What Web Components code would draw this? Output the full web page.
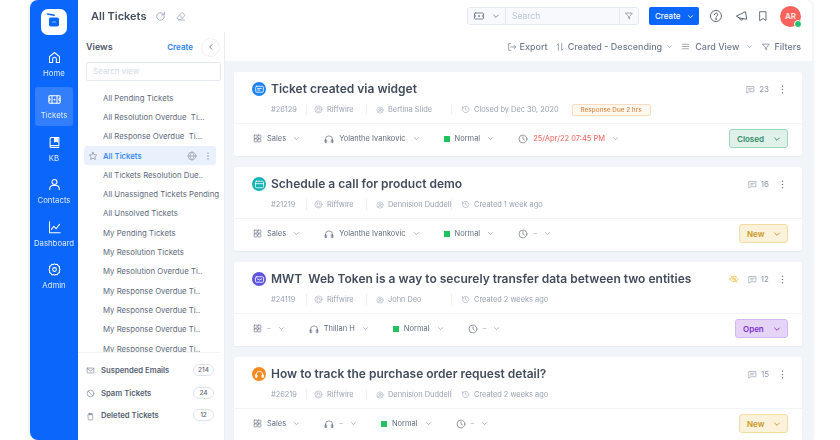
<!DOCTYPE html>
<html><head><meta charset="utf-8"><title>All Tickets</title>
<style>
html,body{margin:0;padding:0;background:#fff;height:440px;overflow:hidden;font-family:Inter,"Liberation Sans",sans-serif}
</style></head><body>
<app-shell>
  <side-rail slot="rail">
    <rail-item icon="home" label="Home"></rail-item>
    <rail-item icon="ticket" label="Tickets" active></rail-item>
    <rail-item icon="book" label="KB"></rail-item>
    <rail-item icon="user" label="Contacts"></rail-item>
    <rail-item icon="chart" label="Dashboard"></rail-item>
    <rail-item icon="gear" label="Admin"></rail-item>
  </side-rail>
  <top-bar slot="top"></top-bar>
  <views-panel slot="views">
    <view-item>All Pending Tickets</view-item>
    <view-item>All Resolution Overdue&nbsp; Ti...</view-item>
    <view-item>All Response Overdue&nbsp; Ti...</view-item>
    <view-item selected>All Tickets</view-item>
    <view-item>All Tickets Resolution Due..</view-item>
    <view-item>All Unassigned Tickets Pending</view-item>
    <view-item>All Unsolved Tickets</view-item>
    <view-item>My Pending Tickets</view-item>
    <view-item>My Resolution Tickets</view-item>
    <view-item>My Resolution Overdue Ti..</view-item>
    <view-item>My Response Overdue Ti..</view-item>
    <view-item>My Response Overdue Ti..</view-item>
    <view-item>My Response Overdue Ti..</view-item>
    <view-item>My Response Overdue Ti..</view-item>
    <count-row slot="foot" icon="mail" count="214">Suspended Emails</count-row>
    <count-row slot="foot" icon="ban" count="24">Spam Tickets</count-row>
    <count-row slot="foot" icon="trash" count="12">Deleted Tickets</count-row>
  </views-panel>
  <list-toolbar slot="toolbar"></list-toolbar>
  <ticket-card slot="cards" kind="chat" color="#1d84f0" title="Ticket created via widget" num="#26129" org="Riffwire" who="Bertina Slide" when="Closed by Dec 30, 2020" due="Response Due 2 hrs" comments="23" dept="Sales" agent="Yolanthe Ivankovic" date="25/Apr/22 07:45 PM" status="closed"></ticket-card>
  <ticket-card slot="cards" kind="card" color="#14b3b3" title="Schedule a call for product demo" num="#21219" org="Riffwire" who="Dennision Duddell" when="Created 1 week ago" comments="16" dept="Sales" agent="Yolanthe Ivankovic" date="–" status="new"></ticket-card>
  <ticket-card slot="cards" kind="mail" color="#5f55e0" title="MWT&nbsp; Web Token is a way to securely transfer data between two entities" num="#24119" org="Riffwire" who="John Deo" when="Created 2 weeks ago" comments="12" dept="–" agent="Thillan H" date="–" status="open" muted></ticket-card>
  <ticket-card slot="cards" kind="headset" color="#f68a1f" title="How to track the purchase order request detail?" num="#26219" org="Riffwire" who="Dennision Duddell" when="Created 2 weeks ago" comments="15" dept="Sales" agent="–" date="–" status="new"></ticket-card>
</app-shell>
<script>
const P={
home:'<path d="M4 10.500 12 4l8 6.500V20h-5v-5.500a3 3 0 0 0-6 0V20H4z"/>',
ticket:'<rect x="3" y="6" width="18" height="12" rx="1.500"/><path d="M3 10a2 2 0 0 1 0 4M21 10a2 2 0 0 0 0 4M8 6v12M16 6v12"/><path d="m12 10 .7 1.400 1.500.2-1.100 1 .3 1.400-1.400-.7-1.400.7.3-1.400-1.100-1 1.500-.2z" fill="currentColor" stroke="none"/>',
book:'<path d="M5 19V5.500A1.500 1.500 0 0 1 6.500 4H19v13H6.500A1.500 1.500 0 0 0 5 18.500 1.500 1.500 0 0 0 6.500 20H19"/><path d="M12 4h5v7l-2.500-1.500L12 11z" fill="currentColor"/>',
user:'<circle cx="12" cy="8" r="4"/><path d="M4.500 20v-1.500a5 5 0 0 1 5-5h5a5 5 0 0 1 5 5V20"/>',
chart:'<path d="M4 3v17.500h17"/><path d="m7 15 4-5 3.500 4L20 7"/>',
gear:'<circle cx="12" cy="12" r="3"/><path d="m12 3 2 1 2.500-.300 1.300 2.200 2.200 1.300L19.700 9.700l1 2.300-1 2.300.300 2.500-2.200 1.300-1.300 2.200-2.500-.300-2 1-2-1-2.500.300-1.300-2.200L4 16.800l.300-2.500-1-2.300 1-2.300L4 7.200l2.200-1.300L7.500 3.700 10 4z"/>',
refresh:'<path d="M19 12a7 7 0 1 1-2.200-5.100L19 9"/><path d="M19.500 4v5h-5"/>',
eraser:'<path d="m4 15 9-9a2 2 0 0 1 2.800 0l3.200 3.200a2 2 0 0 1 0 2.800l-7 7H8z"/><path d="m9 10 6 6M6 20h13"/>',
search:'<rect x="3" y="6" width="18" height="12" rx="1.500"/><path d="M3 10a2 2 0 0 1 0 4M21 10a2 2 0 0 0 0 4"/><path d="m12 9.500 .8 1.700 1.800.2-1.300 1.200.3 1.800-1.600-.9-1.600.9.300-1.800-1.300-1.200 1.800-.2z" fill="currentColor" stroke="none"/>',
funnel:'<path d="M4 5h16l-6.500 8v6l-3-2v-4z"/>',
help:'<circle cx="12" cy="12" r="9.500"/><path d="M9.300 9.500a2.800 2.800 0 1 1 4.300 2.400c-1 .6-1.600 1.200-1.600 2.300"/><circle cx="12" cy="17.300" r=".6" fill="currentColor"/>',
mega:'<path d="m3 12 15-7.500 2 13L8 15.500z"/><path d="M8 15.500a3 3 0 0 0 6 1"/>',
bookmark:'<path d="M6 3.500h12V21l-6-4-6 4z"/>',
export:'<path d="M9 4H4v16h5"/><path d="M9 12h12M17 8l4 4-4 4"/>',
sort:'<path d="M8 20V4L4.500 7.500M16 4v16l3.500-3.500"/>',
lines:'<path d="M4 6h16M4 12h16M4 18h16"/>',
chev:'<path d="m5 9 7 7 7-7"/>',
back:'<path d="m15 5-7 7 7 7"/>',
dots:'<circle cx="12" cy="5" r="1.600" fill="currentColor" stroke="none"/><circle cx="12" cy="12" r="1.600" fill="currentColor" stroke="none"/><circle cx="12" cy="19" r="1.600" fill="currentColor" stroke="none"/>',
star:'<path d="m12 3 2.800 5.800 6.200.9-4.500 4.400 1.100 6.300L12 17.400l-5.600 3 1.100-6.300L3 9.700l6.200-.9z"/>',
globe:'<circle cx="12" cy="12" r="9.500"/><path d="M2.500 12h19M12 2.500c-6 6-6 13 0 19M12 2.500c6 6 6 13 0 19"/>',
mail:'<rect x="3" y="5.500" width="18" height="13" rx="1.500"/><path d="m3.500 7 8.500 6 8.500-6"/>',
ban:'<circle cx="12" cy="12" r="9"/><path d="m5.800 5.800 12.400 12.400"/>',
trash:'<path d="M8 4h8M6 7h12v13a1 1 0 0 1-1 1H7a1 1 0 0 1-1-1z"/><path d="M9 4h6v3H9z"/>',
org:'<circle cx="12" cy="12" r="9.500"/><path d="M8 8h8l-1 3 2 3-5 5-5-5 2-3z"/>',
person:'<circle cx="12" cy="12" r="9.500"/><circle cx="12" cy="10" r="3.500"/><path d="M6 19c1-3 3-4 6-4s5 1 6 4"/>',
history:'<path d="M4 12a8.500 8.500 0 1 0 2.500-6L3.500 8.500"/><path d="M3.500 4v4.500H8M12 7.500V12l3 2"/>',
grid:'<rect x="3" y="3" width="8" height="8" rx="1"/><rect x="13" y="3" width="8" height="8" rx="1"/><rect x="3" y="13" width="8" height="8" rx="1"/><rect x="13" y="13" width="8" height="8" rx="1"/>',
headset:'<path d="M3.500 20v-7a8.500 8.500 0 0 1 17 0v7"/><rect x="2.500" y="14" width="4" height="7" rx="1.500"/><rect x="17.500" y="14" width="4" height="7" rx="1.500"/>',
clock:'<circle cx="12" cy="12" r="9.500"/><path d="M12 6.500V12l3.500 2.500"/>',
comment:'<path d="M3 4h18v14H8l-5 3z"/><path d="M7 9h10M7 13h6"/>',
eyeoff:'<path d="M2 12s3.500-6.500 10-6.500S22 12 22 12s-3.500 6.500-10 6.500S2 12 2 12z"/><circle cx="12" cy="12" r="3"/><path d="m4 4 16 16"/>',
chat:'<rect x="5" y="6" width="14" height="11" rx="1.500"/><path d="M8.500 10h7M8.500 13h4"/>',
card:'<rect x="4.500" y="6" width="15" height="12" rx="2"/><path d="M4.500 10.500h15"/>',
envelope:'<rect x="4.500" y="7" width="15" height="10" rx="2"/><path d="m8 11 4 2 4-2"/>',
hs:'<path d="M6 17v-5a6 6 0 0 1 12 0v5"/><rect x="4.500" y="12.500" width="3" height="5" rx="1" fill="currentColor"/><rect x="16.500" y="12.500" width="3" height="5" rx="1" fill="currentColor"/>'
};
const ico=(n,s,w=1.8,extra='')=>`<svg width="${s}" height="${s}" viewBox="0 0 24 24" fill="none" stroke="currentColor" stroke-width="${w}" stroke-linecap="round" stroke-linejoin="round" style="flex:none;display:block;${extra}">${P[n]}</svg>`;
function def(name,css,html){
  customElements.define(name,class extends HTMLElement{
    connectedCallback(){
      if(this.shadowRoot)return;
      const r=this.attachShadow({mode:'open'});
      r.innerHTML=`<style>${css}</style>`+(typeof html==='function'?html(this):html);
    }
  });
}
def('app-shell',`
:host{display:grid;grid-template-columns:48px 147px 1fr;grid-template-rows:32px 1fr;width:782px;height:440px;margin-left:30px;background:#fff;border-radius:8px 8px 0 8px;overflow:hidden;box-shadow:0 0 4px rgba(30,60,110,.16);filter:blur(.3px)}
.rail{grid-row:1/3;display:flex;min-height:0}
.top{grid-column:2/4;display:flex;min-width:0}
.views{display:flex;min-height:0}
.main{display:flex;flex-direction:column;background:#f1f5f9;min-width:0;min-height:0;overflow:hidden}
.cards{display:flex;flex-direction:column;gap:11px;padding:11px 10px 0 9px}
`,`<div class="rail"><slot name="rail"></slot></div><div class="top"><slot name="top"></slot></div><div class="views"><slot name="views"></slot></div><div class="main"><slot name="toolbar"></slot><div class="cards"><slot name="cards"></slot></div></div>`);
def('side-rail',`
:host{display:flex;flex-direction:column;align-items:center;width:48px;background:#0b66fb;color:#fff}
.logo{display:block;margin:9px 0 9px;flex:none}
.list{display:flex;flex-direction:column;gap:3.500px;align-items:center}
`,`<svg class="logo" width="26" height="26" viewBox="0 0 26 26"><rect width="26" height="26" rx="7" fill="#fff"/><path d="M6.500 5 13 6.300" stroke="#0b66fb" stroke-width="1.600" stroke-linecap="round"/><rect x="8" y="8.500" width="10" height="9" rx="1.800" fill="#0b66fb"/><path d="M11 13h4" stroke="#fff" stroke-width="1" opacity=".5"/></svg><div class="list"><slot></slot></div>`);
def('rail-item',`
:host{display:flex;flex-direction:column;align-items:center;justify-content:center;gap:3px;width:38px;height:39px;border-radius:3px;color:#fff;font:400 7.800px/10px Inter,sans-serif;white-space:nowrap}
:host([active]){background:rgba(255,255,255,.16)}
span{color:#dfeaff}
`,h=>`${ico(h.getAttribute('icon'),15,1.7)}<span>${h.getAttribute('label')}</span>`);
def('top-bar',`
:host{flex:1;display:flex;align-items:center;padding:0 11px 0 13px;background:#fff;border-bottom:1px solid #edf1f6;box-sizing:border-box;height:33px;color:#59657a}
h1{margin:0;font:600 11px/16px Inter,sans-serif;color:#464f60;white-space:nowrap}
.a{display:flex;align-items:center;gap:8px;margin-left:8px;color:#98a4b6}
.search{margin-left:auto;display:flex;align-items:stretch;width:172px;height:18px;border:1px solid #e3e9f1;border-radius:3px;box-sizing:border-box;background:#f7f9fc}
.s1{width:38px;display:flex;align-items:center;justify-content:center;gap:7px;color:#6b778a;border-right:1px solid #e3e9f1;box-sizing:border-box}
.s2{flex:1;font:400 8.500px/16px Inter,sans-serif;color:#bcc6d4;padding-left:6px}
.s3{width:18px;display:flex;align-items:center;justify-content:center;border-left:1px solid #e3e9f1;color:#828d9f}
.btn{margin-left:10px;width:50px;height:18px;background:#0b66fb;color:#fff;border-radius:2px;display:flex;align-items:center;justify-content:space-between;padding:0 5px;box-sizing:border-box;font:500 8px/18px Inter,sans-serif}
.i{display:flex;align-items:center;margin-left:10px;color:#5d6879}
.av{position:relative;width:21px;height:21px;border-radius:50%;background:#f8635c;color:#ffe9e6;font:600 8px/21px Inter,sans-serif;text-align:center}
.av b{position:absolute;right:-1px;bottom:-1px;width:6px;height:6px;background:#1fc16b;border:1px solid #fff;border-radius:50%}
`,`<h1>All Tickets</h1><div class="a">${ico('refresh',13,1.6)}${ico('eraser',12,1.5)}</div>
<div class="search"><div class="s1">${ico('search',12,1.7)}${ico('chev',8,2.6)}</div><div class="s2">Search</div><div class="s3">${ico('funnel',10,1.8)}</div></div>
<div class="btn"><span style="margin-left:1px">Create</span>${ico('chev',7,3)}</div>
<div class="i">${ico('help',14,1.7)}${ico('mega',14,1.7,'margin:0 8px 0 12px')}${ico('bookmark',12,1.9,'margin-right:11px')}<div class="av">AR<b></b></div></div>`);
def('views-panel',`
:host{display:flex;flex-direction:column;width:147px;box-sizing:border-box;background:#fff;border-right:1px solid #e9eef4;position:relative;min-height:0}
.head{display:flex;align-items:center;height:30px;padding:0 4px 0 8px}
.t{font:600 9px/12px Inter,sans-serif;color:#4d5667}
.c{margin-left:auto;font:600 8px/12px Inter,sans-serif;color:#2a7ff3}
.b{margin-left:8px;width:19px;height:19px;border-radius:50%;border:1px solid #edf1f6;display:flex;align-items:center;justify-content:center;color:#6d788a;box-sizing:border-box}
.in{margin:0 3px 0 8px;height:19px;border:1px solid #e3e9f1;border-radius:2px;font:400 8px/17px Inter,sans-serif;color:#d3dae5;padding-left:6px;box-sizing:border-box;flex:none}
.list{flex:none;height:272px;overflow:hidden;padding:7px 0 0 6px;border-bottom:1px solid #f0f3f7;margin-right:4px;display:flex;flex-direction:column;box-sizing:border-box}
.foot{display:flex;flex-direction:column;padding:6.500px 0 0 0;gap:0}
`,`<div class="head"><span class="t">Views</span><span class="c">Create</span><span class="b">${ico('back',8,2.6)}</span></div>
<div class="in">Search view</div><div class="list"><slot></slot></div><div class="foot"><slot name="foot"></slot></div>`);
def('view-item',`
:host{display:flex;align-items:center;flex:none;height:19.300px;padding-left:19px;font:400 7.800px/12px Inter,sans-serif;color:#626c7d;white-space:nowrap;position:relative}
:host([selected]){background:#e9f1fd;border-radius:3px;color:#2a7ff3;font-weight:500;margin-right:4px}
.s,.g,.d{position:absolute;top:50%;transform:translateY(-50%);color:#7c8798}
.s{left:4px}.g{right:19px;color:#8b96a6}.d{right:3px}
`,h=>`<slot></slot>`+(h.hasAttribute('selected')?`<span class="s">${ico('star',10,1.6)}</span><span class="g">${ico('globe',10,1.6)}</span><span class="d">${ico('dots',10,1.6)}</span>`:''));
def('count-row',`
:host{display:flex;align-items:center;height:22.700px;padding-left:8px;color:#555f71;font:600 7.700px/12px Inter,sans-serif;white-space:nowrap}
.i{width:15px;color:#7e8a9c}
.n{margin-left:auto;margin-right:10px;width:19px;height:10px;margin-top:-2px;border:1px solid #dde3ec;border-radius:6px;font:500 6.500px/10px Inter,sans-serif;text-align:center;box-sizing:content-box;color:#5c6677}
`,h=>`<span class="i">${ico(h.getAttribute('icon'),9,1.8)}</span><slot></slot><span class="n">${h.getAttribute('count')}</span>`);
def('list-toolbar',`
:host{display:flex;align-items:center;justify-content:flex-end;height:29px;flex:none;background:#fff;padding-right:11px;color:#707c8e;font:500 9px/12px Inter,sans-serif;white-space:nowrap}
span{display:flex;align-items:center;gap:3px}
.c{color:#8c97a7}
`,`<span>${ico('export',10,1.7)}Export</span><span style="margin-left:7px">${ico('sort',10,1.7)}Created - Descending</span><span class="c" style="margin-left:4px">${ico('chev',7,2.4)}</span><span style="margin-left:8px;gap:5px">${ico('lines',9,1.7)}Card View</span><span class="c" style="margin-left:7px">${ico('chev',7,2.4)}</span><span style="margin-left:8px">${ico('funnel',10,1.7)}Filters</span>`);
const ST={closed:['Closed','#e0f1ea','#9ed8ba','#2f8a63',59],new:['New','#fcf2dc','#f3dca0','#c9971b',49],open:['Open','#e6d4f7','#d4b8f0','#7c2fd0',53]};
def('ticket-card',`
:host{display:block;height:84px;background:#fff;border-radius:3px;box-shadow:0 1px 2px rgba(40,60,90,.06);box-sizing:border-box;color:#6f7a8b;flex:none}
.top{height:51px;border-bottom:1px solid #f2f5f8;position:relative;padding-left:18px}
.tl{display:flex;align-items:center;height:34px;padding-right:14px}
.dot{width:14px;height:14px;border-radius:50%;color:#fff;display:flex;align-items:center;justify-content:center;flex:none;margin-right:5px}
h2{margin:0;font:600 12px/16px Inter,sans-serif;color:#434c5d;white-space:nowrap}
.r{margin-left:auto;display:flex;align-items:center;color:#8d98a8;font:400 8px/12px Inter,sans-serif}
.k{color:#6f7a8b;margin-left:8px}
.off{color:#efc14b;margin-right:9px}
.m{display:flex;align-items:center;height:12px;margin-top:-2.500px;padding-left:19px;font:400 7.400px/12px Inter,sans-serif;color:#99a3b3;white-space:nowrap}
.m>div{display:flex;align-items:center;gap:4px;box-sizing:border-box;height:11px}
.m .sp{border-right:1px solid #edf1f6}
.due{margin-left:13px;height:12px!important;width:79px;justify-content:center;border:1px solid #fbdcc0;background:#fff8f1;border-radius:2px;color:#dd8a45;font-size:6.400px;font-weight:500}
.bot{display:flex;align-items:center;height:29px;padding:0 14px 0 19px;font:400 7.500px/12px Inter,sans-serif;color:#626c7d;white-space:nowrap}
.f{display:flex;align-items:center;gap:5px}
.ch{color:#8c97a7;margin-left:2px}
.sq{width:6px;height:6px;background:#1fc25e;flex:none}
.st{margin-left:auto;height:19px;border:1px solid;border-radius:3px;box-sizing:border-box;display:flex;align-items:center;justify-content:space-between;padding:0 6px 0 7px;font:600 8px/12px Inter,sans-serif}
.red{color:#f0605c}
.dash{color:#a9b3c1}
`,h=>{
 const a=n=>h.getAttribute(n)||'';
 const kinds={chat:'chat',card:'card',mail:'envelope',headset:'hs'};
 const s=ST[a('status')];
 const val=(v,c='')=>`<span class="${v==='–'?'dash':c}">${v}</span>`;
 const chev=`<span class="ch">${ico('chev',7,2.4)}</span>`;
 return `<div class="top"><div class="tl"><span class="dot" style="background:${a('color')}">${ico(kinds[a('kind')],13,1.5)}</span><h2>${a('title')}</h2>
 <div class="r">${h.hasAttribute('muted')?`<span class="off">${ico('eyeoff',10,1.8)}</span>`:''}${ico('comment',9,1.7,'margin-right:4px')}${a('comments')}<span class="k">${ico('dots',11,1.6)}</span></div></div>
 <div class="m"><div class="sp" style="width:36px">${a('num')}</div><div class="sp" style="width:60px;padding-left:7px">${ico('org',9,1.5)}${a('org')}</div><div class="sp" style="width:85px;padding-left:9px">${ico('person',8,1.5)}<span>${a('who')}</span></div><div style="padding-left:9px">${ico('history',9,1.5)}${a('when')}</div>${a('due')?`<div class="due">${a('due')}</div>`:''}</div></div>
 <div class="bot"><div class="f">${ico('grid',9,1.6)}${val(a('dept'))}${chev}</div>
 <div class="f" style="margin-left:24px">${ico('headset',10,1.6)}${val(a('agent'))}${chev}</div>
 <div class="f" style="margin-left:24px"><i class="sq"></i>Normal${chev}</div>
 <div class="f" style="margin-left:24px">${ico('clock',10,1.6)}${val(a('date'),'red')}${chev}</div>
 <div class="st" style="width:${s[4]}px;background:${s[1]};border-color:${s[2]};color:${s[3]}"><span>${s[0]}</span><span>${ico('chev',8,2.8)}</span></div></div>`;
});
</script>
</body></html>
